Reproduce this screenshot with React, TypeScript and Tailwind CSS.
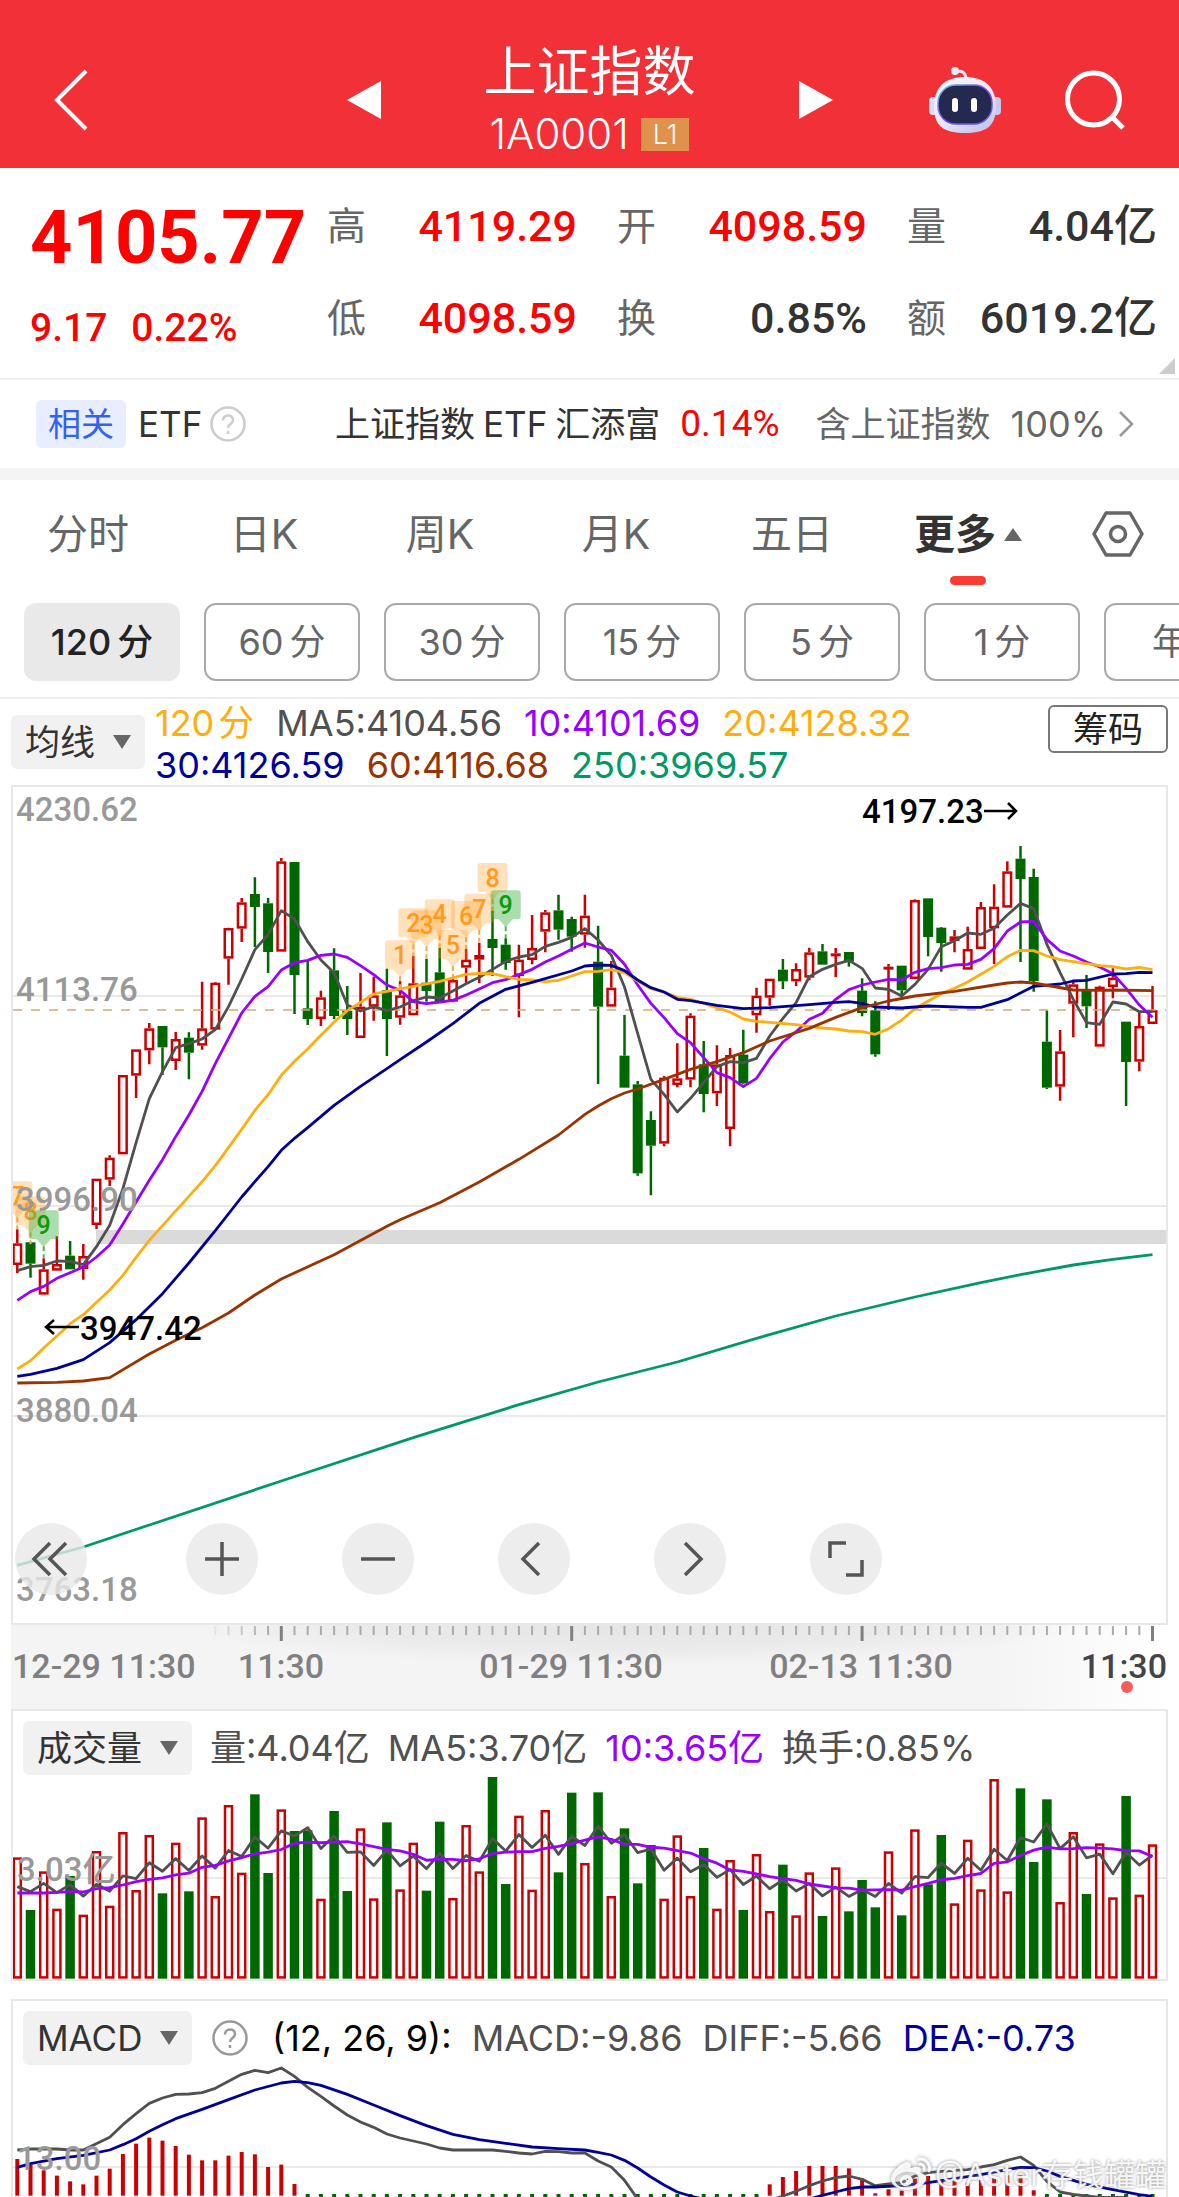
import { FaWeibo } from "react-icons/fa";

const UP = "#cc0000";
const DOWN = "#006800";
const NUM = "font-['Roboto','Noto_Sans_CJK_SC',sans-serif]";

// [high, body top, body bottom, low, rising]
const candles: number[][] = [
  [1345, 1387, 1452, 1476, 1], [1384, 1384, 1448, 1490, 0], [1432, 1465, 1541, 1541, 1], [1366, 1449, 1469, 1469, 1],
  [1380, 1424, 1465, 1465, 0], [1389, 1425, 1464, 1496, 1], [1193, 1193, 1332, 1344, 1], [1123, 1130, 1196, 1215, 1],
  [882, 882, 1120, 1120, 1], [805, 805, 884, 951, 1], [726, 742, 808, 850, 1], [735, 735, 799, 882, 0],
  [753, 774, 840, 867, 1], [754, 770, 815, 895, 0], [602, 742, 794, 806, 1], [603, 605, 746, 746, 1],
  [440, 441, 533, 611, 1], [351, 364, 443, 483, 1], [289, 339, 378, 498, 0], [351, 367, 513, 576, 0],
  [231, 241, 512, 512, 1], [243, 243, 582, 699, 0], [540, 682, 714, 732, 0], [629, 649, 714, 735, 1],
  [502, 568, 705, 714, 0], [615, 689, 714, 762, 0], [576, 677, 771, 771, 1], [587, 643, 677, 719, 1],
  [563, 628, 714, 825, 0], [600, 643, 710, 731, 1], [525, 607, 703, 703, 1], [533, 605, 630, 662, 0],
  [500, 574, 660, 660, 0], [590, 597, 662, 664, 1], [504, 536, 560, 605, 1], [485, 522, 536, 606, 1],
  [390, 474, 501, 585, 0], [472, 491, 546, 566, 0], [491, 536, 585, 709, 1], [402, 501, 537, 550, 1],
  [387, 394, 452, 514, 1], [341, 388, 446, 476, 0], [407, 414, 467, 512, 0], [341, 404, 461, 500, 1],
  [434, 542, 677, 909, 0], [540, 620, 677, 677, 1], [702, 824, 920, 920, 0], [900, 910, 1177, 1184, 0],
  [991, 1017, 1094, 1243, 0], [885, 890, 1088, 1096, 1], [787, 892, 912, 919, 1], [697, 704, 896, 919, 1],
  [780, 850, 939, 994, 0], [793, 850, 937, 975, 1], [801, 822, 1044, 1096, 1], [746, 821, 907, 910, 0],
  [620, 644, 703, 755, 1], [593, 593, 650, 674, 1], [534, 566, 601, 624, 0], [547, 564, 601, 615, 1],
  [500, 514, 590, 598, 1], [489, 511, 551, 551, 0], [501, 517, 523, 588, 1], [513, 513, 542, 557, 0],
  [592, 629, 696, 706, 0], [661, 688, 820, 827, 0], [549, 557, 563, 687, 1], [554, 554, 628, 640, 0],
  [355, 357, 594, 594, 1], [352, 352, 468, 526, 0], [438, 440, 486, 572, 0], [447, 466, 480, 514, 1],
  [437, 504, 566, 566, 1], [363, 378, 504, 504, 1], [310, 377, 442, 549, 1], [241, 271, 380, 380, 1],
  [195, 233, 294, 543, 0], [263, 288, 600, 632, 0], [688, 782, 920, 924, 0], [747, 811, 917, 959, 1],
  [596, 610, 668, 769, 1], [582, 624, 676, 741, 0], [614, 617, 797, 797, 1], [562, 590, 618, 652, 1],
  [722, 722, 843, 975, 0], [690, 735, 842, 871, 1], [615, 687, 729, 729, 1],
];

const ma5 = [
  1469, 1457, 1453, 1440, 1441, 1451, 1397, 1333, 1223, 1085, 953, 872, 800, 788, 774, 746, 677, 594, 506, 461, 389, 414,
  482, 537, 576, 672, 690, 677, 689, 678, 659, 648, 651, 630, 608, 589, 565, 541, 528, 521, 496, 484, 469, 443, 477, 523,
  618, 758, 895, 940, 993, 952, 905, 857, 842, 845, 832, 765, 712, 665, 587, 565, 550, 538, 562, 621, 625, 645, 610, 565,
  497, 479, 456, 460, 442, 402, 367, 383, 490, 575, 655, 725, 730, 663, 669, 692, 692,
];
const ma10 = [
  1558, 1532, 1516, 1492, 1475, 1458, 1428, 1392, 1329, 1263, 1198, 1136, 1067, 1002, 931, 848, 772, 696, 646, 617, 567,
  545, 538, 523, 519, 529, 554, 581, 612, 628, 662, 668, 663, 658, 642, 624, 605, 596, 581, 565, 543, 525, 505, 486, 498,
  508, 550, 612, 667, 710, 758, 785, 830, 875, 890, 917, 892, 833, 783, 752, 715, 697, 655, 626, 612, 603, 595, 597, 574,
  563, 560, 552, 550, 535, 503, 450, 423, 421, 475, 510, 525, 543, 558, 578, 622, 672, 709,
];

// sparse lines: [bar index, value]
const ma20 = [
  [0, 1764], [1, 1739], [2, 1701], [3, 1665], [4, 1628], [5, 1601], [7, 1527], [8, 1483], [9, 1429], [10, 1378],
  [11, 1334], [14, 1202], [15, 1154], [17, 1045], [18, 988], [19, 941], [20, 883], [21, 841], [22, 804], [23, 763],
  [24, 723], [25, 689], [26, 664], [27, 639], [28, 631], [30, 616], [32, 601], [34, 580], [35, 577], [36, 578],
  [37, 587], [38, 595], [39, 597], [40, 602], [41, 598], [42, 585], [43, 572], [44, 571], [45, 566], [46, 575],
  [47, 600], [48, 623], [49, 634], [50, 649], [51, 655], [52, 667], [53, 680], [54, 693], [55, 714], [56, 721],
  [57, 724], [59, 731], [60, 736], [61, 741], [62, 744], [63, 750], [64, 752], [65, 760], [66, 743], [67, 717],
  [68, 683], [69, 660], [70, 638], [71, 622], [72, 603], [73, 580], [74, 556], [75, 527], [76, 508], [77, 509],
  [78, 525], [79, 536], [80, 542], [81, 548], [82, 554], [83, 557], [84, 564], [85, 559], [86, 566],
];
const ma30 = [
  [0, 1786], [1, 1780], [3, 1762], [5, 1736], [7, 1685], [9, 1616], [11, 1538], [13, 1446], [15, 1349], [17, 1248],
  [18, 1202], [19, 1157], [20, 1108], [21, 1072], [22, 1040], [24, 973], [26, 916], [28, 863], [29, 836], [31, 783],
  [33, 728], [35, 667], [37, 625], [39, 604], [42, 570], [43, 555], [44, 552], [45, 553], [46, 569], [47, 597],
  [48, 620], [49, 633], [50, 655], [51, 659], [53, 673], [55, 683], [57, 680], [60, 671], [62, 664], [63, 662],
  [64, 667], [65, 678], [67, 681], [69, 675], [72, 679], [73, 679], [75, 656], [77, 616], [79, 609], [80, 600],
  [81, 598], [83, 579], [84, 578], [85, 574], [86, 575],
];
const ma60 = [
  [0, 1806], [3, 1804], [5, 1800], [7, 1790], [10, 1719], [12, 1678], [14, 1640], [16, 1596], [18, 1542], [20, 1494],
  [24, 1421], [28, 1336], [29, 1316], [32, 1265], [35, 1203], [38, 1135], [41, 1062], [43, 1000], [44, 975], [45, 953],
  [46, 936], [47, 924], [49, 895], [51, 865], [53, 842], [55, 815], [57, 780], [60, 742], [62, 709], [64, 680],
  [66, 660], [68, 645], [71, 631], [74, 612], [75, 606], [76, 603], [77, 606], [80, 627], [82, 628], [83, 627], [86, 629],
];
const ma250 = [
  [0, 2353], [5, 2298], [10, 2232], [20, 2100], [30, 1970], [38, 1871], [44, 1803], [50, 1743], [56, 1672], [62, 1605],
  [68, 1548], [73, 1505], [76, 1481], [80, 1452], [83, 1435], [86, 1421],
];

const signals: [number, number, string][] = [
  [0, 1201, "7"], [1, 1246, "8"], [2, 1288, "9"],
  [29, 478, "1"], [30, 382, "2"], [31, 388, "3"], [32, 355, "4"], [33, 447, "5"],
  [34, 360, "6"], [35, 338, "7"], [36, 246, "8"], [37, 328, "9"],
];

const volumes = [
  349, 507, 391, 503, 405, 521, 330, 494, 273, 447, 282, 457, 305, 451, 229, 465, 192, 395, 160, 396, 205, 270, 268, 473,
  210, 450, 262, 472, 244, 445, 305, 449, 242, 471, 252, 391, 108, 429, 224, 446, 207, 394, 155, 366, 154, 465, 262, 427,
  312, 473, 283, 465, 321, 503, 357, 507, 339, 510, 371, 523, 394, 525, 379, 511, 417, 499, 331, 523, 265, 430, 282, 487,
  296, 445, 114, 451, 142, 363, 175, 483, 273, 459, 307, 469, 165, 461, 310,
];
const volMa5Head = [437, 452, 427, 455];
const volMa10Head = [456, 456, 456, 454, 452, 453, 443, 440, 432];

const macdUp: number[][] = [
  [0, 1251], [1, 1268], [2, 1285], [3, 1301], [4, 1318], [5, 1327], [6, 1301], [7, 1280], [8, 1236], [9, 1205],
  [10, 1187], [11, 1196], [12, 1212], [13, 1238], [14, 1255], [15, 1255], [16, 1241], [17, 1230], [18, 1237],
  [19, 1275], [20, 1268], [21, 1326], [57, 1327], [58, 1305], [59, 1287], [60, 1272], [61, 1272], [62, 1272],
  [63, 1279], [64, 1310], [65, 1354], [66, 1342], [67, 1346], [68, 1310], [69, 1302], [70, 1312], [71, 1315],
  [72, 1322], [73, 1314], [74, 1308], [75, 1300], [76, 1300], [77, 1345],
];
const diff = [
  [0, 1224], [1, 1221], [3, 1221], [4, 1224], [5, 1224], [7, 1186], [8, 1148], [9, 1115], [10, 1084], [11, 1068],
  [12, 1057], [13, 1056], [14, 1052], [15, 1039], [16, 1018], [17, 997], [18, 985], [19, 992], [20, 978], [21, 1003],
  [22, 1036], [23, 1063], [24, 1092], [25, 1119], [26, 1140], [27, 1156], [28, 1176], [29, 1188], [30, 1197],
  [31, 1206], [32, 1218], [33, 1224], [36, 1224], [37, 1228], [38, 1233], [39, 1236], [40, 1228], [41, 1229],
  [42, 1233], [43, 1233], [44, 1257], [45, 1275], [46, 1315], [47, 1371], [50, 1450], [54, 1440], [57, 1376],
  [58, 1362], [59, 1348], [60, 1331], [61, 1317], [62, 1307], [63, 1302], [64, 1312], [65, 1331], [66, 1326],
  [67, 1322], [68, 1302], [69, 1292], [70, 1288], [71, 1285], [72, 1283], [73, 1275], [74, 1268], [75, 1255],
  [76, 1245], [77, 1270], [78, 1318], [79, 1350], [80, 1357], [81, 1362], [82, 1366], [84, 1366], [85, 1385],
];
const dea = [
  [0, 1276], [1, 1265], [3, 1250], [5, 1240], [7, 1224], [8, 1208], [9, 1190], [10, 1168], [11, 1148], [12, 1130],
  [14, 1102], [16, 1073], [18, 1044], [20, 1023], [21, 1018], [22, 1022], [23, 1030], [25, 1057], [27, 1089],
  [29, 1121], [31, 1151], [33, 1177], [35, 1193], [37, 1204], [39, 1215], [41, 1220], [43, 1224], [44, 1231],
  [45, 1239], [46, 1255], [47, 1278], [48, 1305], [49, 1329], [50, 1350], [51, 1362], [52, 1371], [54, 1390],
  [58, 1388], [60, 1371], [61, 1360], [62, 1350], [63, 1340], [64, 1335], [65, 1335], [67, 1331], [69, 1322],
  [71, 1310], [73, 1298], [75, 1283], [76, 1276], [77, 1277], [78, 1287], [79, 1303], [81, 1327], [83, 1343],
  [85, 1358], [86, 1363],
];

const x = (i: number) => 17.3 + i * 13.2;
const y = (v: number) => v / 3;

const Line = ({ data, color }: { data: number[][] | number[]; color: string }) => (
  <polyline
    points={data.map((d, i) => (typeof d === "number" ? `${x(i)},${y(d)}` : `${x(d[0])},${y(d[1])}`)).join(" ")}
    fill="none"
    stroke={color}
    strokeWidth="2.8"
    strokeLinejoin="round"
  />
);

const average = (head: number[], n: number) =>
  volumes.map((_, i) =>
    i < n - 1 ? head[i] : volumes.slice(i - n + 1, i + 1).reduce((a, b) => a + b, 0) / n
  );

const Header = () => (
  <header className="grid h-[168px] grid-cols-[1fr_486px_1fr] items-center bg-[#f23038] pt-8 text-white">
    <button aria-label="返回" className="ml-13 w-10">
      <svg viewBox="0 0 40 62" className="w-10" fill="none" stroke="currentColor" strokeWidth="4">
        <path d="M34 2 5 31 34 60" />
      </svg>
    </button>
    <div className="flex items-center justify-between">
      <button aria-label="上一个">
        <svg viewBox="0 0 34 38" className="w-[34px]" fill="currentColor"><path d="M34 0v38L0 19z" /></svg>
      </button>
      <div className="flex flex-col items-center">
        <h1 className="text-[53px] leading-[68px]">上证指数</h1>
        <div className="flex items-center gap-3 text-[42px] leading-[56px]">
          <span className="font-light">1A0001</span>
          <span className="bg-[#e0914c] px-3 text-[27px] leading-[33px] font-light">L1</span>
        </div>
      </div>
      <button aria-label="下一个">
        <svg viewBox="0 0 34 38" className="w-[34px]" fill="currentColor"><path d="M0 0v38l34-19z" /></svg>
      </button>
    </div>
    <div className="flex items-center justify-end gap-16 pr-[54px]">
      <button aria-label="智能助手">
        <svg viewBox="0 0 72 66" className="w-[72px]">
          <defs>
            <linearGradient id="shell" x1="0" y1="0" x2="0.6" y2="1">
              <stop offset="0" stopColor="#f8f8ff" />
              <stop offset="0.7" stopColor="#e6e6fb" />
              <stop offset="1" stopColor="#c9c8ee" />
            </linearGradient>
            <linearGradient id="rim" x1="0" y1="0" x2="1" y2="1">
              <stop offset="0" stopColor="#5fd0e8" />
              <stop offset="0.5" stopColor="#8a3df0" />
              <stop offset="1" stopColor="#4b5df5" />
            </linearGradient>
          </defs>
          <path d="M27 5c6-2 10 1 10 7" fill="none" stroke="#e4e4f8" strokeWidth="3" />
          <circle cx="26" cy="4" r="4" fill="#e9e9fb" />
          <rect x="0" y="30" width="10" height="18" rx="4" fill="#dcdcf6" />
          <rect x="62" y="30" width="10" height="18" rx="4" fill="#c9c8f0" />
          <path d="M36 10c20 0 31 10 31 30S56 66 36 66 5 60 5 40 16 10 36 10z" fill="url(#shell)" />
          <rect x="9" y="18" width="54" height="39" rx="18" fill="#23294f" stroke="url(#rim)" strokeWidth="1.5" />
          <rect x="23" y="31" width="6" height="14" rx="3" fill="#fff" />
          <rect x="42" y="31" width="6" height="14" rx="3" fill="#fff" />
        </svg>
      </button>
      <button aria-label="搜索">
        <svg viewBox="0 0 60 60" className="w-[60px]" fill="none" stroke="currentColor" strokeWidth="5">
          <circle cx="28.500" cy="29" r="26" />
          <path d="m47 47 11 11" />
        </svg>
      </button>
    </div>
  </header>
);

const Stat = ({ label, value, color = "text-[#333]" }: { label: string; value: string; color?: string }) => (
  <div className="flex items-center justify-between whitespace-nowrap">
    <dt className="text-[39px] text-[#666]">{label}</dt>
    <dd className={`${NUM} text-[43px] font-medium ${color}`}>{value}</dd>
  </div>
);

const Quote = () => (
  <section className="relative grid h-[212px] grid-cols-[minmax(0,256fr)_249fr_249fr_249fr] gap-x-10 border-b-2 border-[#eee] pr-[22px] pl-[30px]">
    <div className={`${NUM} flex flex-col font-medium whitespace-nowrap text-[#ff0000]`}>
      <strong className="mt-5 text-[74px] leading-[100px] font-bold">4105.77</strong>
      <div className="mt-3 flex gap-6 text-[39px] leading-[56px]">
        <span>9.17</span>
        <span>0.22%</span>
      </div>
    </div>
    <dl className="flex flex-col gap-8 pt-7 leading-[60px]">
      <Stat label="高" value="4119.29" color="text-[#ff0000]" />
      <Stat label="低" value="4098.59" color="text-[#ff0000]" />
    </dl>
    <dl className="flex flex-col gap-8 pt-7 leading-[60px]">
      <Stat label="开" value="4098.59" color="text-[#ff0000]" />
      <Stat label="换" value="0.85%" />
    </dl>
    <dl className="flex flex-col gap-8 pt-7 leading-[60px]">
      <Stat label="量" value="4.04亿" />
      <Stat label="额" value="6019.2亿" />
    </dl>
    <svg viewBox="0 0 16 16" className="absolute right-1 bottom-1 w-4" fill="#ccc"><path d="M16 0v16H0z" /></svg>
  </section>
);

const Help = ({ color }: { color: string }) => (
  <svg viewBox="0 0 36 36" className={`w-9 ${color}`} fill="none" stroke="currentColor" strokeWidth="2.500">
    <circle cx="18" cy="18" r="16.500" />
    <path d="M13 14.500c0-7 10-6.500 10-.5 0 4-5 4-5 8" />
    <path d="M18 25v3" />
  </svg>
);

const Related = () => (
  <section className="flex h-[88px] items-center pr-[45px] pl-9 text-[35px] whitespace-nowrap text-[#333]">
    <span className="rounded-md bg-[#e8edff] px-3 text-[33px] leading-[48px] text-[#2f62f5]">相关</span>
    <span className="mr-2 ml-3 text-[35px]">ETF</span>
    <button aria-label="说明"><Help color="text-[#ccc]" /></button>
    <a href="#etf" className="ml-auto flex items-center">
      上证指数<span className="mx-2 text-[35px]">ETF</span>汇添富
      <span className={`${NUM} ml-5 text-[37px] text-[#ff0000]`}>0.14%</span>
      <span className="ml-9 text-[#666]">含上证指数</span>
      <span className="ml-5 text-[36px] text-[#666]">100%</span>
      <svg viewBox="0 0 16 28" className="ml-3 w-4" fill="none" stroke="#999" strokeWidth="2.500"><path d="m2 2 12 12L2 26" /></svg>
    </a>
  </section>
);

const Tabs = () => (
  <nav className="grid h-[134px] grid-cols-[repeat(6,176fr)_123fr] items-start border-t-12 border-[#f4f4f4] pt-6 text-[41px] leading-[60px] text-[#666]">
    <button>分时</button>
    <button>日K</button>
    <button>周K</button>
    <button>月K</button>
    <button>五日</button>
    <button className="flex flex-col items-center font-bold text-[#333]">
      <span className="flex items-center gap-2">
        更多
        <svg viewBox="0 0 18 13" className="w-[18px]" fill="#666"><path d="M9 0 18 13H0z" /></svg>
      </span>
      <span className="mt-3 h-[9px] w-9 rounded-full bg-[#fe3b30]" />
    </button>
    <button aria-label="设置" className="flex h-[60px] items-center justify-center">
      <svg viewBox="0 0 52 46" className="w-[52px]" fill="none" stroke="#666" strokeWidth="3.500" strokeLinejoin="round">
        <path d="M14 2h24l12 21-12 21H14L2 23z" />
        <circle cx="26" cy="23" r="7.500" />
      </svg>
    </button>
  </nav>
);

const periods = [["120", "分"], ["60", "分"], ["30", "分"], ["15", "分"], ["5", "分"], ["1", "分"], ["", "年K"]];

const Periods = () => (
  <div className="flex gap-6 overflow-hidden border-b-2 border-[#eee] px-6 pt-px pb-4 text-[36px]">
    {periods.map(([n, unit], i) => (
      <button
        key={i}
        className={
          i === 0
            ? "flex h-[78px] w-[156px] flex-none items-center justify-center gap-1.5 rounded-xl bg-[#e9e9e9] font-medium text-[#222]"
            : "flex h-[78px] w-[156px] flex-none items-center justify-center gap-1.5 rounded-xl border-2 border-[#aaa] text-[#666]"
        }
      >
        {n && <span>{n}</span>}
        <span>{unit}</span>
      </button>
    ))}
  </div>
);

const Picker = ({ label, name, width }: { label: string; name: string; width: string }) => (
  <div className={`relative flex-none ${width}`}>
    <select
      aria-label={name}
      defaultValue={label}
      className="h-[54px] w-full appearance-none rounded-md bg-[#f1f1f1] pl-[14px] text-[35px] leading-[54px] text-[#333]"
    >
      <option>{label}</option>
    </select>
    <svg viewBox="0 0 18 14" className="pointer-events-none absolute top-5 right-[14px] w-[18px]" fill="#666">
      <path d="M0 0h18L9 14z" />
    </svg>
  </div>
);

const MaLegend = () => (
  <div className="flex h-[86px] items-start px-[11px] text-[36px] leading-[42px] whitespace-nowrap">
    <div className="pt-4"><Picker label="均线" name="主图指标" width="w-[134px]" /></div>
    <div className="ml-[10px] flex-auto pt-[3px]">
      <div className="flex gap-[22px]">
        <span className="flex gap-1 text-[#ffae0d]"><span>120</span>分</span>
        <span className="text-[#505050]">MA5:4104.56</span>
        <span className="text-[#9900ff]">10:4101.69</span>
        <span className="text-[#ffae0d]">20:4128.32</span>
      </div>
      <div className="flex gap-[22px]">
        <span className="text-[#000099]">30:4126.59</span>
        <span className="text-[#993300]">60:4116.68</span>
        <span className="text-[#009966]">250:3969.57</span>
      </div>
    </div>
    <button className="mt-[6px] h-12 w-[120px] rounded-md border-2 border-[#777] text-[35px] leading-[42px] text-[#222]">筹码</button>
  </div>
);

const Signal = ({ i, top, text }: { i: number; top: number; text: string }) => {
  const green = text === "9";
  const cx = x(i);
  const t = y(top);
  return (
    <g>
      <path
        d={`M${cx - 12} ${t}h24q3 0 3 3v23q0 3 -3 3h-5l-7 8l-7 -8h-5q-3 0 -3 -3v-23q0 -3 3 -3z`}
        fill={green ? "#33aa33" : "#ff9a1e"}
        fillOpacity={green ? 0.4 : 0.3}
      />
      <path d={`M${cx} ${t + 36}v12`} stroke={green ? "#4cb94c" : "#f5a742"} strokeWidth="2" strokeDasharray="5 3" />
      <text
        x={cx}
        y={t + 24}
        textAnchor="middle"
        fontSize="25"
        fontWeight="500"
        fill={green ? "#0a9a0a" : "#ff9a1e"}
      >
        {text}
      </text>
    </g>
  );
};

const RoundButton = ({ label, d, className = "" }: { label: string; d: string; className?: string }) => (
  <button aria-label={label} className={`size-[72px] rounded-full bg-[#e8e8e8]/80 ${className}`}>
    <svg viewBox="0 0 72 72" className="w-full" fill="none" stroke="#555" strokeWidth="3.500"><path d={d} /></svg>
  </button>
);

const PriceChart = () => (
  <section className={`relative mx-[11px] border-2 border-[#e8e8e8] ${NUM}`}>
    <svg viewBox="13 6 1153 836" className="block w-full">
      <g stroke="#e9e9e9" strokeWidth="2">
        <path d="M13 215h1153M13 425h1153M13 635h1153" />
      </g>
      <rect x="96" y="449" width="1070" height="14" fill="#dadada" />
      {candles.map(([high, top, bottom, low, up], i) => (
        <g key={i} stroke={up ? UP : DOWN} strokeWidth="2.500">
          <path d={`M${x(i)} ${y(high)}V${y(top)}M${x(i)} ${y(bottom)}V${y(low)}`} />
          <rect
            x={x(i) - 3.75}
            y={y(top) + 1.25}
            width="7.500"
            height={Math.max(y(bottom - top) - 2.5, 0.5)}
            fill={up ? "#fff" : DOWN}
          />
        </g>
      ))}
      <path d="M13 229h1153" stroke="#d9a868" strokeWidth="1.500" strokeDasharray="9 9" />
      {signals.map(([i, top, text]) => <Signal key={i} i={i} top={top} text={text} />)}
      <Line data={ma5} color="#505050" />
      <Line data={ma10} color="#9900ff" />
      <Line data={ma20} color="#ffae0d" />
      <Line data={ma30} color="#000099" />
      <Line data={ma60} color="#993300" />
      <Line data={ma250} color="#009966" />
      <g fontSize="33" fontWeight="500" fill="#999">
        <text x="16" y="40">4230.62</text>
        <text x="16" y="220">4113.76</text>
        <text x="16" y="430">3996.90</text>
        <text x="16" y="641">3880.04</text>
        <text x="16" y="820">3763.18</text>
      </g>
      <g fontSize="33" fontWeight="500" fill="#000">
        <text x="862" y="42">4197.23</text>
        <text x="80" y="559">3947.42</text>
      </g>
      <g fill="none" stroke="#000" strokeWidth="2.500">
        <path d="M984 30h32m-8-8 8 8-8 8" />
        <path d="M79 546H46m8-7-8 7 8 7" />
      </g>
    </svg>
    <div className="absolute bottom-7 left-[2px] flex gap-[84px]">
      <RoundButton label="最早" d="M35 20 19 36l16 16M51 20 35 36l16 16" className="mr-[15px]" />
      <RoundButton label="放大" d="M19 36h34M36 19v34" />
      <RoundButton label="缩小" d="M19 36h34" />
      <RoundButton label="左移" d="M41 20 25 36l16 16" />
      <RoundButton label="右移" d="M31 20l16 16-16 16" />
      <RoundButton label="全屏" d="M20 35V20h16M52 37v15H36" />
    </div>
  </section>
);

const ticks = Array.from({ length: 72 }, (_, k) => k + 15);

const TimeAxis = () => (
  <div className={`mx-[11px] bg-linear-to-r from-[#f4f4f4] from-85% to-white ${NUM}`}>
    <svg viewBox="11 0 1157 84" className="block w-full">
      <defs>
        <radialGradient id="axis-shade" cx="0.5" cy="0" r="0.5" gradientTransform="translate(0 0) scale(1 1.6)">
          <stop offset="0" stopColor="#000" stopOpacity="0.06" />
          <stop offset="0.6" stopColor="#000" stopOpacity="0.04" />
          <stop offset="1" stopColor="#000" stopOpacity="0" />
        </radialGradient>
      </defs>
      <rect x="180" y="0" width="900" height="50" fill="url(#axis-shade)" />
      {ticks.map((i) => {
        const major = [20, 42, 64, 86].includes(i);
        return (
          <path
            key={i}
            d={major ? `M${x(i)} 1v15` : `M${x(i)} 1v9`}
            stroke={major ? "#808080" : "#aaa"}
            strokeWidth={major ? 3 : 2}
            opacity={Math.min(1, (i - 14) / 5)}
          />
        );
      })}
      <g fontSize="34" fontWeight="500" fill="#808080">
        <text x="12" y="53">12-29 11:30</text>
        <text x="281" y="53" textAnchor="middle">11:30</text>
        <text x="571" y="53" textAnchor="middle">01-29 11:30</text>
        <text x="861" y="53" textAnchor="middle">02-13 11:30</text>
        <text x="1167" y="53" textAnchor="end" fill="#444">11:30</text>
      </g>
      <circle cx="1127" cy="62" r="6" fill="#f55c5c" />
    </svg>
  </div>
);

const VolumeChart = () => (
  <section className="mx-[11px] border-2 border-[#e8e8e8]">
    <div className="flex items-center gap-[18px] px-[10px] pt-[10px] text-[36px] leading-[54px] whitespace-nowrap text-[#505050]">
      <Picker label="成交量" name="成交量指标" width="w-[169px]" />
      <span>量:4.04亿</span>
      <span>MA5:3.70亿</span>
      <span className="text-[#9900ff]">10:3.65亿</span>
      <span>换手:0.85%</span>
    </div>
    <svg viewBox="13 34 1153 204" className="block w-full">
      <path d="M13 137h1153" stroke="#e9e9e9" strokeWidth="2" />
      {volumes.map((v, i) => (
        <rect
          key={i}
          x={x(i) - 3.5}
          y={y(v) + 1.25}
          width="7"
          height={y(713 - v) - 2.5}
          fill={candles[i][4] ? "#fff" : DOWN}
          stroke={candles[i][4] ? UP : DOWN}
          strokeWidth="2.500"
        />
      ))}
      <Line data={average(volMa5Head, 5)} color="#505050" />
      <Line data={average(volMa10Head, 10)} color="#9900ff" />
      <text x="17" y="140" fontSize="33" fontWeight="500" fill="#999" className={NUM}>3.03亿</text>
    </svg>
  </section>
);

const MacdChart = () => (
  <section className="relative mx-[11px] mt-[18px] border-2 border-b-0 border-[#e8e8e8]">
    <div className="flex items-center gap-5 px-[10px] pt-[10px] text-[36px] leading-[54px] whitespace-nowrap text-[#505050]">
      <Picker label="MACD" name="副图指标" width="w-[169px]" />
      <button aria-label="指标说明"><Help color="text-[#999]" /></button>
      <span className="ml-1 text-black">(12, 26, 9):</span>
      <span>MACD:-9.86</span>
      <span>DIFF:-5.66</span>
      <span className="text-[#000099]">DEA:-0.73</span>
    </div>
    <svg viewBox="13 323 1153 134" className="block w-full">
      <path d="M13 425h1153" stroke="#e9e9e9" strokeWidth="2" />
      {candles.map((_, i) => {
        const bar = macdUp.find((b) => b[0] === i);
        return bar ? (
          <rect key={i} x={x(i) - 2} y={y(bar[1])} width="4" height={y(1361 - bar[1])} fill={UP} />
        ) : (
          <rect key={i} x={x(i) - 2} y="452" width="4" height="8" fill={DOWN} />
        );
      })}
      <Line data={diff} color="#505050" />
      <Line data={dea} color="#000099" />
      <text x="17" y="428" fontSize="33" fontWeight="500" fill="#999" className={NUM}>13.00</text>
    </svg>
    <div className="absolute right-0 bottom-1 flex items-center gap-1 text-[31px] leading-[40px] text-white/90 text-shadow-[0_0_3px_#888]">
      <FaWeibo className="size-10 drop-shadow-[0_0_2px_#888]" />
      @Aster存钱罐罐
    </div>
  </section>
);

const App = () => {
  return (
    <main className="overflow-hidden bg-white font-['Inter','Noto_Sans_CJK_SC',sans-serif]">
      <Header />
      <Quote />
      <Related />
      <Tabs />
      <Periods />
      <MaLegend />
      <PriceChart />
      <TimeAxis />
      <VolumeChart />
      <MacdChart />
    </main>
  );
};

export default App;
